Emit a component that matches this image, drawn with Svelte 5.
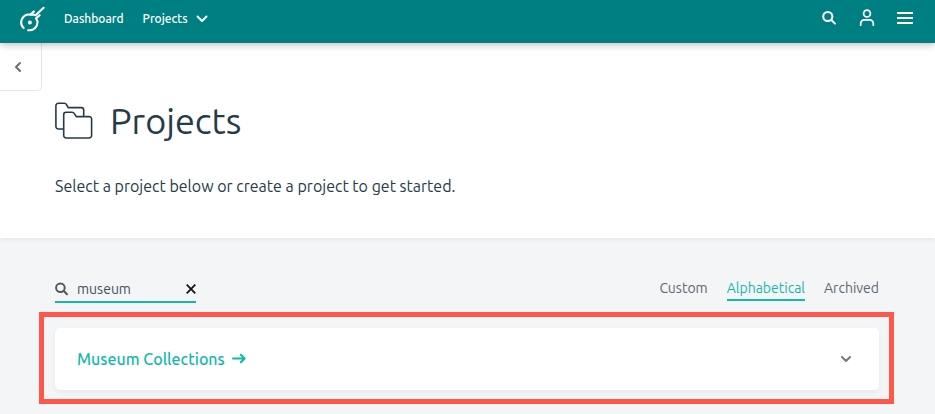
<script>
  let query = $state('museum');
  let sort = $state('Alphabetical');
  const sorts = ['Custom', 'Alphabetical', 'Archived'];
  const projects = ['Museum Collections'];
  const shown = $derived(projects.filter((p) => p.toLowerCase().includes(query.toLowerCase())));
</script>

<div class="page">
  <header>
    <a class="logo" href="#home" aria-label="Home">
      <svg width="26" height="26" viewBox="0 0 26 26" fill="none" stroke="#fff" stroke-width="2.1" stroke-linecap="round" stroke-linejoin="round">
        <path d="M4.6 22A7.9 7.9 0 0 1 11.4 8.6L14.8 5.4M11.4 8.6H14.2L16.6 9.2L24.6 1.8M17 12.4L20.6 9.2M17 12.4L18.4 15A8.1 8.1 0 0 1 9.2 24.2" />
        <circle cx="10.9" cy="16.4" r="2" fill="#fff" stroke="none" />
      </svg>
    </a>
    <nav>
      <a href="#dashboard">Dashboard</a>
      <button class="drop">
        Projects
        <svg width="12" height="8" viewBox="0 0 12 8" fill="none" stroke="#fff" stroke-width="2" stroke-linecap="round" stroke-linejoin="round"><path d="M1.5 1.5L6 6L10.5 1.5" /></svg>
      </button>
    </nav>
    <div class="tools">
      <button aria-label="Search">
        <svg width="16" height="18" viewBox="0 0 16 18" fill="none" stroke="#fff" stroke-width="2" stroke-linecap="round"><circle cx="6.8" cy="7.5" r="4.6" /><path d="M10.3 11L14 14.6" /></svg>
      </button>
      <button aria-label="Account">
        <svg width="16" height="18" viewBox="0 0 16 18" fill="none" stroke="#fff" stroke-width="1.7" stroke-linecap="round"><circle cx="8" cy="4.5" r="3.4" /><path d="M1.7 16.2V14.6A3.8 3.8 0 0 1 5.5 10.8H10.5A3.8 3.8 0 0 1 14.3 14.6V16.2" /></svg>
      </button>
      <button aria-label="Menu">
        <svg width="16" height="18" viewBox="0 0 16 18" fill="none" stroke="#fff" stroke-width="1.8"><path d="M0 4H16M0 9H16M0 14H16" /></svg>
      </button>
    </div>
  </header>

  <section class="hero">
    <button class="back" aria-label="Back">
      <svg width="8" height="12" viewBox="0 0 8 12" fill="none" stroke="#66737a" stroke-width="2" stroke-linecap="round" stroke-linejoin="round"><path d="M6 2L2 6L6 10" /></svg>
    </button>
    <div class="intro">
      <h1>
        <svg width="38" height="38" viewBox="0 0 38 38" fill="none" stroke="#263b47" stroke-width="1.6" stroke-linejoin="round">
          <path d="M8.4 27H3.3A2.4 2.4 0 0 1 .9 24.6V3.7A2.4 2.4 0 0 1 3.3 1.3H9.3C10.3 1.3 11 1.7 11.5 2.6L13.2 5.6H26.3A2.4 2.4 0 0 1 28.7 8V14.6" />
          <path d="M8.7 12.7A2.4 2.4 0 0 1 11.1 10.3H17.2C18.2 10.3 18.9 10.8 19.4 11.6L21.2 14.6H34.2A2.4 2.4 0 0 1 36.6 17V33.6A2.4 2.4 0 0 1 34.2 36H11.1A2.4 2.4 0 0 1 8.7 33.6Z" />
        </svg>
        Projects
      </h1>
      <p>Select a project below or create a project to get started.</p>
    </div>
  </section>

  <main>
    <div class="filters">
      <label class="search">
        <svg width="14" height="14" viewBox="0 0 14 14" fill="none" stroke="#55595c" stroke-width="2" stroke-linecap="round"><circle cx="5.4" cy="5.7" r="4.3" /><path d="M8.8 9L12 12.2" /></svg>
        <input type="text" aria-label="Search projects" bind:value={query} />
        <button aria-label="Clear search" onclick={() => (query = '')}>
          <svg width="10" height="10" viewBox="0 0 10 10" fill="none" stroke="#111" stroke-width="1.7"><path d="M.7 .7L9.3 9.3M9.3 .7L.7 9.3" /></svg>
        </button>
      </label>
      <div class="sorts">
        {#each sorts as name}
          <button class:active={sort === name} onclick={() => (sort = name)}>{name}</button>
        {/each}
      </div>
    </div>
    <div class="highlight">
      {#each shown as name}
        <article>
          <a href="#project">
            {name}
            <svg width="14" height="12" viewBox="0 0 14 12" fill="none" stroke="#14b8ab" stroke-width="2" stroke-linecap="round" stroke-linejoin="round"><path d="M1 5.5H12.5M8.9 1.7L12.7 5.5L8.9 9.3" /></svg>
          </a>
          <button aria-label="Expand {name}">
            <svg width="12" height="8" viewBox="0 0 12 8" fill="none" stroke="#707a82" stroke-width="2" stroke-linecap="round" stroke-linejoin="round"><path d="M2 2L6 6L10 2" /></svg>
          </button>
        </article>
      {/each}
    </div>
  </main>
</div>

<style>
  :global(body) { background: #f4f5f7; }
  .page { font-family: Ubuntu, "Noto Sans", sans-serif; color: #263b47; }
  a { text-decoration: none; }
  button { border: 0; padding: 0; background: none; font: inherit; color: inherit; cursor: pointer; }
  svg { display: block; flex: none; }
  header {
    position: relative;
    display: flex;
    align-items: center;
    height: 43px;
    box-sizing: border-box;
    padding: 0 22px 6px 19px;
    background: #007f82;
    box-shadow: 0 1px 8px rgba(0, 0, 0, 0.3);
    color: #fff;
  }
  .logo { margin-right: 19px; }
  nav { display: flex; gap: 19px; font-size: 12px; font-weight: 500; line-height: 18px; }
  nav a { color: #fff; }
  .drop { display: flex; align-items: center; gap: 8px; }
  .tools { display: flex; gap: 22px; margin-left: auto; padding-bottom: 2px; }
  .hero { background: #fff; box-shadow: 0 1px 6px rgba(0, 0, 0, 0.08); }
  .back {
    display: flex;
    align-items: center;
    justify-content: center;
    width: 42px;
    height: 48px;
    padding-right: 6px;
    border: solid #e6e7e9;
    border-width: 0 1px 1px 0;
    border-radius: 0 0 5px 0;
  }
  .intro { padding: 6px 56px 40px 55px; }
  h1 { display: flex; align-items: center; gap: 17px; margin: 0; font-size: 36px; font-weight: 400; line-height: 48px; }
  p { margin: 29px 0 0; font-size: 16px; line-height: 24px; }
  main { padding: 38px 56px 10px 55px; }
  .filters { display: flex; justify-content: space-between; align-items: flex-end; }
  .search { display: flex; align-items: center; width: 141px; height: 27px; box-sizing: border-box; border-bottom: 2px solid #14b8ab; }
  input { flex: 1; min-width: 0; padding: 0 0 0 8px; border: 0; outline: 0; background: none; font: inherit; font-size: 14px; color: #3f505b; }
  .sorts { display: flex; gap: 19px; font-size: 14px; line-height: 20px; color: #5b6970; padding-bottom: 2px; }
  .sorts button { padding-bottom: 1px; border-bottom: 2px solid transparent; }
  .sorts .active { color: #14b8ab; border-color: #14b8ab; }
  .highlight { margin: 9px -15px 0 -16px; padding: 11px 10px 9px 11px; border: 5px solid #ff584a; }
  article {
    display: flex;
    align-items: center;
    justify-content: space-between;
    padding: 19px 27px 19px 22px;
    background: #fff;
    border-radius: 5px;
    box-shadow: 0 2px 5px rgba(0, 0, 0, 0.06);
  }
  article a { display: flex; align-items: center; gap: 7px; font-size: 16px; font-weight: 500; line-height: 24px; color: #14b8ab; }
</style>
